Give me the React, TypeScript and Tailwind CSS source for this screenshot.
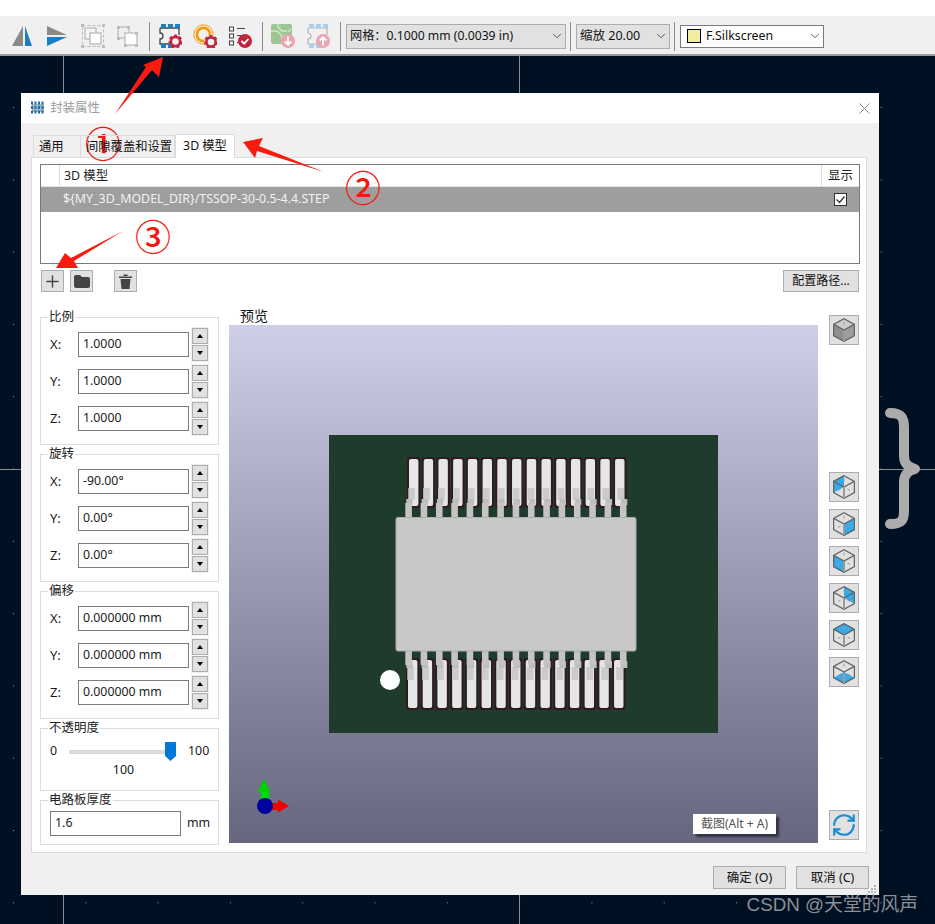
import { ReactNode } from "react";
import { ChevronDown, Plus, RefreshCw } from "lucide-react";

// --- Toolbar icons ---

const Gear = ({ x, y, r = 6, color = "#c0273f" }: { x: number; y: number; r?: number; color?: string }) => (
  <g>
    <circle cx={x} cy={y} r={r} fill="none" stroke={color} strokeWidth={2} strokeDasharray="3 2.2" />
    <circle cx={x} cy={y} r={r - 1.4} fill="none" stroke={color} strokeWidth={2.6} />
  </g>
);

const ToolIcon = ({ children }: { children: ReactNode }) => (
  <svg width="24" height="24" viewBox="0 0 24 24" className="shrink-0">
    {children}
  </svg>
);

const Pads = ({ color }: { color: string }) => (
  <>
    <rect x="3" y="0" width="5" height="4" fill={color} />
    <rect x="10" y="0" width="5" height="4" fill={color} />
    <rect x="17" y="0" width="5" height="4" fill={color} />
    <rect x="3" y="20" width="5" height="4" fill={color} />
    <rect x="10" y="20" width="5" height="4" fill={color} />
  </>
);

const ToolbarSep = ({ className }: { className: string }) => <div className={`w-px h-[29px] bg-[#8c8c8c] shrink-0 ${className}`} />;

const Toolbar = () => (
  <div className="h-[40px] bg-[#f0f0f0] border-b-2 border-[#9a9a9a] flex items-center pl-[11px] pt-[2px] shrink-0">
    <div className="flex items-center gap-[11px]">
      <ToolIcon>
        <polygon points="1,22 12,2 12,22" fill="#8a8a8a" />
        <polygon points="14,2 21,22 14,22" fill="#1c7fc4" />
      </ToolIcon>
      <ToolIcon>
        <polygon points="1,2 21,11 1,11" fill="#8a8a8a" />
        <polygon points="1,13 21,13 1,22" fill="#1c7fc4" />
      </ToolIcon>
      <ToolIcon>
        <rect x="1.5" y="1.5" width="21" height="21" fill="none" stroke="#bdbdbd" strokeDasharray="3 2" />
        <rect x="4" y="4" width="11" height="11" fill="#f4f4f4" stroke="#bdbdbd" strokeWidth="1.4" />
        <rect x="9" y="9" width="11" height="11" fill="#fff" stroke="#bdbdbd" strokeWidth="1.4" />
        <rect x="0" y="0" width="3" height="3" fill="#bdbdbd" />
        <rect x="21" y="0" width="3" height="3" fill="#bdbdbd" />
        <rect x="0" y="21" width="3" height="3" fill="#bdbdbd" />
        <rect x="21" y="21" width="3" height="3" fill="#bdbdbd" />
      </ToolIcon>
      <ToolIcon>
        <rect x="2" y="3" width="11" height="11" fill="none" stroke="#bdbdbd" strokeWidth="1.3" />
        <rect x="9" y="9" width="12" height="12" fill="#fff" stroke="#bdbdbd" strokeWidth="1.3" />
        <rect x="1" y="2" width="3" height="3" fill="#bdbdbd" />
        <rect x="11" y="2" width="3" height="3" fill="#bdbdbd" />
        <rect x="1" y="13" width="3" height="3" fill="#bdbdbd" />
        <rect x="19" y="8" width="3" height="3" fill="#bdbdbd" />
        <rect x="8" y="20" width="3" height="3" fill="#bdbdbd" />
        <rect x="19" y="20" width="3" height="3" fill="#bdbdbd" />
      </ToolIcon>
    </div>
    <ToolbarSep className="ml-[9px]" />
    <div className="flex items-center gap-[11px] ml-[8px]">
      <ToolIcon>
        <path d="M2 4h19v7M2 4v5a3 3 0 0 1 0 6v5h10" fill="none" stroke="#444" strokeWidth="1.3" />
        <Pads color="#1c7fc4" />
        <Gear x={17.5} y={17.5} />
      </ToolIcon>
      <ToolIcon>
        <circle cx="10.5" cy="10.5" r="9.7" fill="none" stroke="#f39c12" strokeWidth="1" />
        <circle cx="10.5" cy="10.5" r="6.6" fill="none" stroke="#f39c12" strokeWidth="2.8" />
        <circle cx="18" cy="18" r="7" fill="#f0f0f0" />
        <Gear x={18} y={18} />
      </ToolIcon>
      <ToolIcon>
        <rect x="1.5" y="3" width="4" height="4" fill="none" stroke="#444" />
        <rect x="1.5" y="10" width="4" height="4" fill="none" stroke="#444" />
        <rect x="1.5" y="17" width="4" height="4" fill="none" stroke="#444" />
        <path d="M9 4.5h8M9 11.5h4M9 18.5h2" stroke="#444" />
        <circle cx="17" cy="17" r="7" fill="#c0273f" />
        <path d="M13.5 17l2.6 2.6 4.3-4.6" fill="none" stroke="#fff" strokeWidth="1.8" />
      </ToolIcon>
    </div>
    <ToolbarSep className="ml-[10px]" />
    <div className="flex items-center gap-[11px] ml-[8px]">
      <ToolIcon>
        <rect x="0" y="0" width="21" height="20" rx="2" fill="#9cc794" />
        <path d="M0 7h6l5 5v8M7 0v3l4 4h5M20 5l-3 3" fill="none" stroke="#d8e8c8" strokeWidth="1.4" />
        <circle cx="17" cy="17" r="7" fill="#e8a5b2" />
        <path d="M17 12.5v8M13.7 17.5l3.3 3.3 3.3-3.3" fill="none" stroke="#fff" strokeWidth="1.8" />
      </ToolIcon>
      <ToolIcon>
        <path d="M2 4h19v7M2 4v5a3 3 0 0 1 0 6v5h10" fill="none" stroke="#b5b5b5" strokeWidth="1.2" />
        <Pads color="#a8d0ec" />
        <circle cx="17" cy="17" r="7" fill="#e8a5b2" />
        <path d="M17 21.5v-8M13.7 16.5l3.3-3.3 3.3 3.3" fill="none" stroke="#fff" strokeWidth="1.8" />
      </ToolIcon>
    </div>
    <ToolbarSep className="ml-[10px]" />
    <div className="ml-[5px] w-[220px] h-[25px] bg-[#e1e1e1] border border-[#adadad] flex items-center justify-between pl-[3px] pr-px text-[12.2px] text-[#111]">
      <span>网格：0.1000 mm (0.0039 in)</span>
      <ChevronDown size={14} strokeWidth={1.4} className="text-[#333]" />
    </div>
    <ToolbarSep className="ml-[4px]" />
    <div className="ml-[5px] w-[94px] h-[25px] bg-[#e1e1e1] border border-[#adadad] flex items-center justify-between pl-[3px] pr-px text-[12.5px] text-[#111]">
      <span>缩放 20.00</span>
      <ChevronDown size={14} strokeWidth={1.4} className="text-[#333]" />
    </div>
    <ToolbarSep className="ml-[4px]" />
    <div className="ml-[5px] w-[144px] h-[23px] bg-white border border-[#7a7a7a] flex items-center pl-[6px] pr-px text-[12.4px] text-[#111]">
      <div className="w-[14px] h-[14px] bg-[#f2eda1] border border-black mr-[5px]" />
      <span className="flex-1">F.Silkscreen</span>
      <ChevronDown size={14} strokeWidth={1.4} className="text-[#333]" />
    </div>
  </div>
);

// --- Left column ---

const Group = ({ title, className, children }: { title: string; className: string; children: ReactNode }) => (
  <div className={`relative border border-[#dcdcdc] ${className}`}>
    <span className="absolute left-[7px] top-[-8px] bg-white px-px text-[12.5px] leading-[14px] text-[#222]">{title}</span>
    {children}
  </div>
);

const Spinner = () => (
  <div className="w-[16px] h-[33px] ml-[3px] flex flex-col gap-px outline outline-1 outline-[#eeeeee]">
    <div className="flex-1 bg-[#e1e1e1] border border-[#adadad] flex items-center justify-center">
      <div className="w-0 h-0 border-x-[3.5px] border-x-transparent border-b-[4px] border-b-black" />
    </div>
    <div className="flex-1 bg-[#e1e1e1] border border-[#adadad] flex items-center justify-center">
      <div className="w-0 h-0 border-x-[3.5px] border-x-transparent border-t-[4px] border-t-black" />
    </div>
  </div>
);

const SpinRow = ({ axis, value }: { axis: string; value: string }) => (
  <div className="flex items-center h-[25px] text-[12.3px] text-[#1a1a1a]">
    <span className="w-[28px] text-[13px]">{axis}:</span>
    <div className="w-[111px] h-[25px] border border-[#7a7a7a] bg-white flex items-center pl-[4px]">{value}</div>
    <Spinner />
  </div>
);

const SpinGroup = ({ title, values }: { title: string; values: string[] }) => (
  <Group title={title} className="h-[128px] pt-[14px] pl-[9px]">
    <div className="flex flex-col gap-[12px]">
      <SpinRow axis="X" value={values[0]} />
      <SpinRow axis="Y" value={values[1]} />
      <SpinRow axis="Z" value={values[2]} />
    </div>
  </Group>
);

const OpacityGroup = () => (
  <Group title="不透明度" className="h-[63px] pl-[9px] text-[12.4px] text-[#1a1a1a]">
    <div className="flex items-center h-[19px] mt-[13px]">
      <span className="w-[19px]">0</span>
      <div className="w-[96px] h-[4px] bg-[#e0e0e0] border border-[#d4d4d4]" />
      <svg width="11" height="19" viewBox="0 0 11 19" className="shrink-0">
        <polygon points="0,0 11,0 11,14 5.5,19 0,14" fill="#0078d7" />
      </svg>
      <span className="ml-[12px]">100</span>
    </div>
    <div className="w-[147px] text-center leading-[16px] mt-px">100</div>
  </Group>
);

const ThicknessGroup = () => (
  <Group title="电路板厚度" className="h-[45px] pt-[10px] pl-[9px] text-[12.4px] text-[#1a1a1a]">
    <div className="flex items-center">
      <div className="w-[131px] h-[25px] border border-[#7a7a7a] bg-white flex items-center pl-[4px]">1.6</div>
      <span className="ml-[6px]">mm</span>
    </div>
  </Group>
);

// --- 3D preview ---

const PAD_COUNT = [...Array(15)].map((_, i) => i);

const ChipDrawing = () => (
  <svg width="389" height="298" viewBox="0 0 389 298">
    {/* top row */}
    {PAD_COUNT.map((i) => {
      const pad = 78 + i * 14.72;
      const foot = 79.3 + i * 14.93;
      const leg = 76.3 + i * 15.33;
      return (
        <g key={i}>
          <rect x={pad} y={22} width={13.4} height={51} rx={3} fill="#2e1a20" />
          <rect x={pad + 2} y={24} width={9.4} height={47} rx={2} fill="#e6e6e6" />
          <rect x={foot} y={53} width={6.6} height={12} fill="#cbcbcb" />
          <rect x={leg + 1} y={64} width={6.4} height={6} fill="#bdbdbd" />
          <rect x={leg} y={68} width={6.6} height={15} fill="#c4c4c4" />
        </g>
      );
    })}
    {/* bottom row */}
    {PAD_COUNT.map((i) => {
      const pad = 77 + i * 14.72;
      const foot = 78.3 + i * 14.93;
      const leg = 76.3 + i * 15.33;
      return (
        <g key={i}>
          <rect x={pad} y={223} width={13.4} height={52} rx={3} fill="#2e1a20" />
          <rect x={pad + 2} y={225} width={9.4} height={48} rx={2} fill="#e6e6e6" />
          <rect x={foot} y={232} width={6.6} height={13} fill="#cbcbcb" />
          <rect x={leg + 1} y={226} width={6.4} height={7} fill="#bdbdbd" />
          <rect x={leg} y={215} width={6.6} height={15} fill="#c4c4c4" />
        </g>
      );
    })}
    <rect x="67" y="82.5" width="240" height="133.5" rx="2" fill="#c8c8c8" stroke="#adadad" />
    <circle cx="61" cy="245" r="10" fill="#fff" />
  </svg>
);

const AxisGizmo = () => (
  <svg width="44" height="44" viewBox="0 0 44 44" className="absolute left-[18px] top-[453px]">
    <rect x="14" y="14" width="8" height="14" fill="#00e000" />
    <polygon points="17,1 10.5,14 23.5,14" fill="#00d000" />
    <rect x="20" y="25" width="13" height="7" fill="#f00000" />
    <polygon points="42,28 31,21.5 31,34.5" fill="#f00000" />
    <circle cx="18" cy="28" r="8" fill="#0000a0" />
  </svg>
);

const PreviewPane = () => (
  <div className="w-[589px] shrink-0">
    <div className="pl-[11px] h-[16px] text-[14px] leading-[16px] text-[#111]">预览</div>
    <div className="relative w-[589px] h-[518px] mt-px bg-gradient-to-b from-[#cfcfe9] to-[#66667e] flex items-center justify-center">
      <div className="w-[389px] h-[298px] bg-[#1e3b2c]">
        <ChipDrawing />
      </div>
      <AxisGizmo />
      <div className="absolute left-[464px] top-[489px] w-[83px] h-[20px] bg-white text-[12px] leading-[20px] text-center text-[#555] shadow-[3px_3px_2px_#333344]">
        截图(Alt + A)
      </div>
    </div>
  </div>
);

// --- View cube buttons ---

const cubeFaces: Record<string, string> = {
  none: "",
  backLeft: "0,6 11,0 11,12 0,18",
  right: "11,12 22,6 22,18 11,24",
  left: "0,6 11,12 11,24 0,18",
  backRight: "11,0 22,6 22,18 11,12",
  top: "0,6 11,0 22,6 11,12",
  bottom: "0,18 11,12 22,18 11,24",
};

const CubeButton = ({ face, className = "" }: { face: string; className?: string }) => (
  <div className={`w-[30px] h-[30px] bg-[#e1e1e1] border border-[#adadad] flex items-center justify-center ${className}`}>
    <svg width="22" height="24" viewBox="0 0 22 24">
      {face === "none" ? (
        <>
          <polygon points="0,6 11,0 22,6 11,12" fill="#cdcdcd" />
          <polygon points="0,6 11,12 11,24 0,18" fill="#8f8f8f" />
          <polygon points="22,6 11,12 11,24 22,18" fill="#9d9d9d" />
        </>
      ) : (
        <polygon points={cubeFaces[face]} fill="#35ace9" />
      )}
      <polygon points="11,0.7 21.4,6.4 21.4,17.6 11,23.3 0.6,17.6 0.6,6.4" fill="none" stroke="#666" strokeWidth="1.3" />
      <path d="M11 3.5v3M5 15.5l2.5-1.3M14.5 14l2.5 1.3" stroke="#9a9a9a" strokeWidth="1" />
      <path d="M11 13v10" stroke="#9a9a9a" strokeWidth="2" />
      <path d="M0.8 6.4L11 12l10.2-5.6" fill="none" stroke="#666" strokeWidth="1.3" />
    </svg>
  </div>
);

const ViewButtons = () => (
  <div className="w-[30px] shrink-0 flex flex-col">
    <CubeButton face="none" className="mt-[-2px]" />
    <div className="flex flex-col gap-[7px] mt-[127px]">
      <CubeButton face="backLeft" />
      <CubeButton face="right" />
      <CubeButton face="left" />
      <CubeButton face="backRight" />
      <CubeButton face="top" />
      <CubeButton face="bottom" />
    </div>
    <div className="mt-[123px] w-[30px] h-[30px] bg-[#e1e1e1] border border-[#adadad] flex items-center justify-center text-[#1c8bd0]">
      <RefreshCw size={26} strokeWidth={2} />
    </div>
  </div>
);

// --- Model table ---

const ModelTable = () => (
  <div className="w-[820px] h-[100px] border border-[#7a7a7a] bg-white text-[12.4px]">
    <div className="h-[22px] flex text-[#222] border-b border-[#e4e4e4]">
      <div className="w-[19px] border-r border-[#dcdcdc]" />
      <div className="flex-1 pl-[4px] leading-[22px] border-r border-[#dcdcdc]">3D 模型</div>
      <div className="w-[37px] text-center leading-[22px]">显示</div>
    </div>
    <div className="h-[25px] bg-[#9e9e9e] flex items-center text-[#f2f2f2]">
      <div className="flex-1 pl-[22px]">{"${MY_3D_MODEL_DIR}/TSSOP-30-0.5-4.4.STEP"}</div>
      <div className="w-[37px] flex justify-center">
        <svg width="13" height="13" viewBox="0 0 13 13">
          <rect x="0.5" y="0.5" width="12" height="12" fill="#fff" stroke="#333" />
          <path d="M2.5 6.5l3 3 5-6" fill="none" stroke="#333" strokeWidth="1.3" />
        </svg>
      </div>
    </div>
  </div>
);

const SquareButton = ({ className = "", children }: { className?: string; children: ReactNode }) => (
  <div className={`w-[23px] h-[22px] bg-[#e1e1e1] border border-[#adadad] flex items-center justify-center text-[#444] ${className}`}>
    {children}
  </div>
);

const TableActions = () => (
  <div className="flex items-center mt-[6px] w-[819px]">
    <SquareButton className="ml-px">
      <Plus size={19} strokeWidth={1.8} />
    </SquareButton>
    <SquareButton className="ml-[6px]">
      <svg width="16" height="14" viewBox="0 0 16 14">
        <path d="M0 3a2 2 0 0 1 2-2h4l2 2h6a2 2 0 0 1 2 2v7a2 2 0 0 1-2 2H2a2 2 0 0 1-2-2z" fill="#444" />
      </svg>
    </SquareButton>
    <SquareButton className="ml-[21px]">
      <svg width="13" height="15" viewBox="0 0 13 15">
        <path d="M0 2.5h13v1.5H0zM4.5 0.5h4v1.5h-4zM1.5 5h10l-1 10h-8z" fill="#444" />
      </svg>
    </SquareButton>
    <div className="ml-auto w-[76px] h-[22px] bg-[#e1e1e1] border border-[#adadad] text-[12px] leading-[20px] text-center text-[#111]">
      配置路径...
    </div>
  </div>
);

// --- Dialog ---

const Tabs = () => (
  <div className="flex items-end h-[24px] ml-[12px] mt-[10px] text-[12.3px] text-[#111] relative z-10">
    <div className="w-[48px] h-[22px] border border-b-0 border-[#dcdcdc] pl-[5px] leading-[21px]">通用</div>
    <div className="w-[94px] h-[22px] border-y border-r border-b-0 border-[#dcdcdc] pl-[5px] leading-[21px]">间隙覆盖和设置</div>
    <div className="w-[60px] h-[24px] bg-white border border-b-0 border-[#dcdcdc] mb-[-1px] text-center leading-[22px]">3D 模型</div>
  </div>
);

const Dialog = () => (
  <div className="absolute left-[21px] top-[37px] w-[858px] h-[802px] bg-[#f0f0f0] font-['Noto_Sans','Noto_Sans_CJK_SC',sans-serif]">
    <div className="h-[30px] bg-white flex items-center pl-[9px] pr-[9px]">
      <svg width="16" height="14" viewBox="0 0 16 14">
        <rect x="2" y="3" width="12" height="8" fill="#9fb6c8" />
        <path d="M2 0.5v13M5.5 0.5v13M9 0.5v13M12.5 0.5v13" stroke="#1c6fa8" strokeWidth="2" strokeDasharray="3 1.5" />
      </svg>
      <span className="ml-[4px] text-[12.5px] text-[#9a9a9a]">封装属性</span>
      <svg width="11" height="11" viewBox="0 0 11 11" className="ml-auto">
        <path d="M0.5 0.5l10 10M10.5 0.5l-10 10" stroke="#8a8a8a" />
      </svg>
    </div>
    <Tabs />
    <div className="ml-[10px] w-[836px] h-[696px] bg-white border border-[#dcdcdc] pt-[6px] pl-[8px]">
      <ModelTable />
      <TableActions />
      <div className="flex mt-[25px]">
        <div className="w-[179px] shrink-0 flex flex-col gap-[9px]">
          <SpinGroup title="比例" values={["1.0000", "1.0000", "1.0000"]} />
          <SpinGroup title="旋转" values={["-90.00°", "0.00°", "0.00°"]} />
          <SpinGroup title="偏移" values={["0.000000 mm", "0.000000 mm", "0.000000 mm"]} />
          <OpacityGroup />
          <ThicknessGroup />
        </div>
        <div className="ml-[10px] mt-[-9px]">
          <PreviewPane />
        </div>
        <div className="ml-[11px]">
          <ViewButtons />
        </div>
      </div>
    </div>
    <div className="flex justify-end gap-[10px] mt-[13px] pr-[10px] text-[12.5px] text-[#111]">
      <div className="w-[73px] h-[23px] bg-[#e1e1e1] border border-[#adadad] text-center leading-[21px]">确定 (O)</div>
      <div className="w-[73px] h-[23px] bg-[#e1e1e1] border border-[#adadad] text-center leading-[21px]">取消 (C)</div>
    </div>
    <svg width="9" height="8" viewBox="0 0 9 8" className="absolute right-[2px] bottom-[2px]">
      <path d="M6 0h2v2H6zM3 3h2v2H3zM6 3h2v2H6zM0 6h2v2H0zM3 6h2v2H3zM6 6h2v2H6z" fill="#b5b5b5" />
    </svg>
  </div>
);

// --- Canvas behind the dialog ---

const DOT_XS = [...Array(13)].map((_, i) => 13 + i * 72.3);
const DOT_YS = [...Array(12)].map((_, i) => 51 + i * 72.3);

const CanvasGrid = () => (
  <svg width="935" height="868" className="absolute left-0 top-0">
    <path d="M63.5 0V868M519.5 0V868M0 413.5H935" stroke="#8e8e8e" />
    {DOT_XS.map((x) => DOT_YS.map((y) => <rect key={`${x}-${y}`} x={x} y={y} width="1" height="1" fill="#9a9a9a" />))}
    <path
      d="M890 357C902 357 904 362 904 372V400C904 408 908 411 915 413C908 415 904 418 904 426V455C904 464 902 468 890 468"
      fill="none"
      stroke="#ababab"
      strokeWidth="10"
      strokeLinecap="round"
      strokeLinejoin="round"
    />
  </svg>
);

// --- Red notes drawn over the screenshot ---

const Annotations = () => (
  <>
    <svg width="935" height="924" className="absolute left-0 top-0 pointer-events-none">
      <polygon points="163,57 159,77 152,70 115,114 146,67 143,65" fill="#fb1a0e" />
      <polygon points="243,142 263,138 259,146 324,172 257,151 255,158" fill="#fb1a0e" />
      <polygon points="56,268 65,253 71,258 123,231 74,261 78,268" fill="#fb1a0e" />
    </svg>
    <span className="absolute left-[85px] top-[120px] text-[36px] leading-[44px] font-medium text-[#f01a10] font-['Noto_Sans_CJK_SC',sans-serif]">①</span>
    <span className="absolute left-[345px] top-[164px] text-[36px] leading-[44px] font-medium text-[#f01a10] font-['Noto_Sans_CJK_SC',sans-serif]">②</span>
    <span className="absolute left-[135px] top-[213px] text-[36px] leading-[44px] font-medium text-[#f01a10] font-['Noto_Sans_CJK_SC',sans-serif]">③</span>
    <span className="absolute right-[17px] top-[893px] text-[18.8px] leading-[24px] text-[#8d8f95] font-['Liberation_Sans','Noto_Sans_CJK_SC',sans-serif]">
      CSDN @天堂的风声
    </span>
  </>
);

export default function App() {
  return (
    <div className="relative w-[935px] h-[924px] overflow-hidden flex flex-col bg-white font-['Noto_Sans','Noto_Sans_CJK_SC',sans-serif]">
      <div className="h-[16px] shrink-0" />
      <Toolbar />
      <div className="relative flex-1 bg-[#001023]">
        <CanvasGrid />
        <Dialog />
      </div>
      <Annotations />
    </div>
  );
}
